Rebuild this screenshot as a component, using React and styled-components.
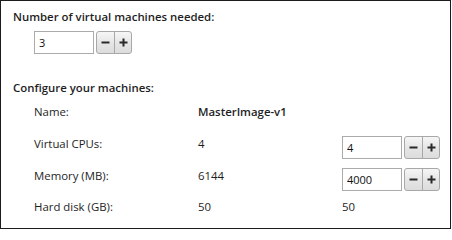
import React from 'react'
import styled, { createGlobalStyle } from 'styled-components'

const Global = createGlobalStyle`
  body {
    margin: 0;
    background: #ffffff;
  }
`

const Panel = styled.div`
  box-sizing: border-box;
  width: 451px;
  height: 229px;
  border: 1px solid #1c1c1c;
  background: #ffffff;
  padding: 8px 0 0 12px;
  font-family: "Open Sans", "Noto Sans", sans-serif;
  font-size: 11.4px;
  color: #1e1e1e;
`

const Heading = styled.div`
  font-weight: 600;
  line-height: 16px;
  margin-top: ${p => p.$gap || 0}px;
`

const Stepper = styled.div`
  display: flex;
  align-items: center;
  gap: 2px;
  margin-left: ${p => p.$indent || 0}px;
  margin-top: ${p => p.$top || 0}px;
`

const Field = styled.input`
  box-sizing: border-box;
  width: 60px;
  height: 23px;
  border: 1px solid #ababab;
  padding: 0 4px;
  margin: 0;
  font-family: inherit;
  font-size: 11px;
  color: #111;
  background: #fff;
  outline: none;
`

const Buttons = styled.div`
  display: flex;
  box-sizing: border-box;
  height: 23px;
  border: 1px solid #a8a8a8;
  border-radius: 3px;
  overflow: hidden;
  background: linear-gradient(#f6f6f6, #e6e6e6 50%, #dcdcdc);
`

const Btn = styled.button`
  width: 17px;
  height: 100%;
  padding: 0;
  margin: 0;
  border: none;
  border-left: ${p => (p.$split ? '1px solid #a8a8a8' : 'none')};
  background: transparent;
  display: flex;
  align-items: center;
  justify-content: center;
  cursor: pointer;
`

const Grid = styled.div`
  display: grid;
  grid-template-columns: 164px 144px auto;
  grid-template-rows: 32px 32px 32px 29px;
  align-items: center;
  margin-left: 21px;
`

const Cell = styled.div`
  line-height: 16px;
  font-weight: ${p => (p.$strong ? 600 : 400)};
`

const Minus = () => (
  <svg width="9" height="9" viewBox="0 0 9 9">
    <rect x="0.5" y="3.5" width="8" height="2" fill="#2a2a2a" />
  </svg>
)

const Plus = () => (
  <svg width="9" height="9" viewBox="0 0 9 9">
    <rect x="0.5" y="3.5" width="8" height="2" fill="#2a2a2a" />
    <rect x="3.5" y="0.5" width="2" height="8" fill="#2a2a2a" />
  </svg>
)

const NumberBox = ({ value, indent, top }) => (
  <Stepper $indent={indent} $top={top}>
    <Field defaultValue={value} />
    <Buttons>
      <Btn aria-label="decrease"><Minus /></Btn>
      <Btn $split aria-label="increase"><Plus /></Btn>
    </Buttons>
  </Stepper>
)

const rows = [
  { label: 'Name:', value: 'MasterImage-v1', strong: true },
  { label: 'Virtual CPUs:', value: '4', edit: '4' },
  { label: 'Memory (MB):', value: '6144', edit: '4000' },
  { label: 'Hard disk (GB):', value: '50', fixed: '50' },
]

export default function App() {
  return (
    <>
      <Global />
      <Panel>
        <Heading>Number of virtual machines needed:</Heading>
        <NumberBox value="3" indent={21} top={6} />
        <Heading $gap={26}>Configure your machines:</Heading>
        <Grid>
          {rows.map(r => (
            <React.Fragment key={r.label}>
              <Cell>{r.label}</Cell>
              <Cell $strong={r.strong}>{r.value}</Cell>
              {r.edit ? (
                <NumberBox value={r.edit} top={6} />
              ) : (
                <Cell>{r.fixed || ''}</Cell>
              )}
            </React.Fragment>
          ))}
        </Grid>
      </Panel>
    </>
  )
}
